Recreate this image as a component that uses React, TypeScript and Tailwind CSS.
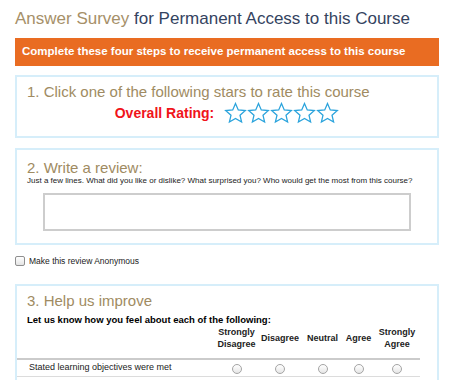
import React from 'react';

const Star = () => (
    <svg width="23" height="22" viewBox="0 0 24 23" className="shrink-0">
        <path
            d="M12 1.5 L14.9 8.3 L22.3 8.9 L16.7 13.8 L18.4 21 L12 17.2 L5.6 21 L7.3 13.8 L1.7 8.9 L9.1 8.3 Z"
            fill="none"
            stroke="#2aa3dc"
            strokeWidth="1.3"
            strokeLinejoin="miter"
        />
    </svg>
);

const Radio = () => (
    <span className="inline-block w-[10px] h-[10px] rounded-full border border-[#a5a5a5] bg-gradient-to-b from-white to-[#e6e6e6] align-middle" />
);

const columns = ['Strongly Disagree', 'Disagree', 'Neutral', 'Agree', 'Strongly Agree'];

const App = () => {
    return (
        <div className="w-[450px] h-[380px] overflow-hidden bg-white pl-[15px] pr-[11px] pt-[9px] font-['Liberation_Sans',Arial,sans-serif]">
            <h1 className="text-[17px] leading-[20px]">
                <span className="text-[#a69069]">Answer Survey</span>{' '}
                <span className="text-[#34435f]">for Permanent Access to this Course</span>
            </h1>

            <div className="mt-[9px] h-[28px] bg-[#e96c22] flex items-center pl-[7px] text-white font-bold text-[11.5px]">
                Complete these four steps to receive permanent access to this course
            </div>

            {/* step 1 */}
            <div className="mt-[9px] border-2 border-[#d6eefa] pt-[6px] pb-[12px] px-[10px]">
                <h2 className="text-[15px] leading-[18px] text-[#a08b62]">
                    1. Click one of the following stars to rate this course
                </h2>
                <div className="mt-[1px] h-[22px] flex items-center justify-center gap-[10px]">
                    <span className="text-[14px] font-bold text-[#f0141a]">Overall Rating:</span>
                    <div className="flex">
                        <Star />
                        <Star />
                        <Star />
                        <Star />
                        <Star />
                    </div>
                </div>
            </div>

            {/* step 2 */}
            <div className="mt-[10px] border-2 border-[#d6eefa] pt-[9px] pb-[12px] px-[10px]">
                <h2 className="text-[15px] leading-[17px] text-[#a08b62]">2. Write a review:</h2>
                <p className="text-[8px] leading-[10px] text-[#222]">
                    Just a few lines. What did you like or dislike? What surprised you? Who would get the most from this course?
                </p>
                <textarea className="mt-[7px] mx-[16px] block w-[368px] h-[38px] border-2 border-[#cdcdcd] resize-none outline-none" />
            </div>

            <label className="mt-[11px] flex items-center gap-[4px] h-[10px] text-[8.5px] text-[#222]">
                <span className="w-[10px] h-[10px] rounded-[2px] border border-[#8f8f8f] bg-gradient-to-b from-white to-[#e4e4e4]" />
                Make this review Anonymous
            </label>

            {/* step 3 */}
            <div className="mt-[18px] border-2 border-[#d6eefa] pt-[6px] pb-[12px]">
                <h2 className="px-[10px] text-[15px] leading-[18px] text-[#a08b62]">3. Help us improve</h2>
                <p className="px-[10px] mt-[4px] text-[9.5px] leading-[12px] font-bold text-black">
                    Let us know how you feel about each of the following:
                </p>
                <table className="table-fixed border-collapse w-[403px] text-[#222]">
                    <colgroup>
                        <col className="w-[198px]" />
                        <col className="w-[43px]" />
                        <col className="w-[44px]" />
                        <col className="w-[41px]" />
                        <col className="w-[31px]" />
                        <col className="w-[46px]" />
                    </colgroup>
                    <thead>
                        <tr className="border-b-2 border-[#cbcbcb]">
                            <th />
                            {columns.map((c) => (
                                <th key={c} className="pb-[8px] align-middle text-center text-[9px] leading-[12px] font-bold">
                                    {c.split(' ').map((w) => (
                                        <div key={w}>{w}</div>
                                    ))}
                                </th>
                            ))}
                        </tr>
                    </thead>
                    <tbody>
                        <tr className="border-b border-[#dcdcdc]">
                            <td className="pl-[12px] h-[17px] text-[9px]">Stated learning objectives were met</td>
                            {columns.map((c) => (
                                <td key={c} className="text-center leading-none">
                                    <Radio />
                                </td>
                            ))}
                        </tr>
                    </tbody>
                </table>
            </div>
        </div>
    );
};

export default App;
